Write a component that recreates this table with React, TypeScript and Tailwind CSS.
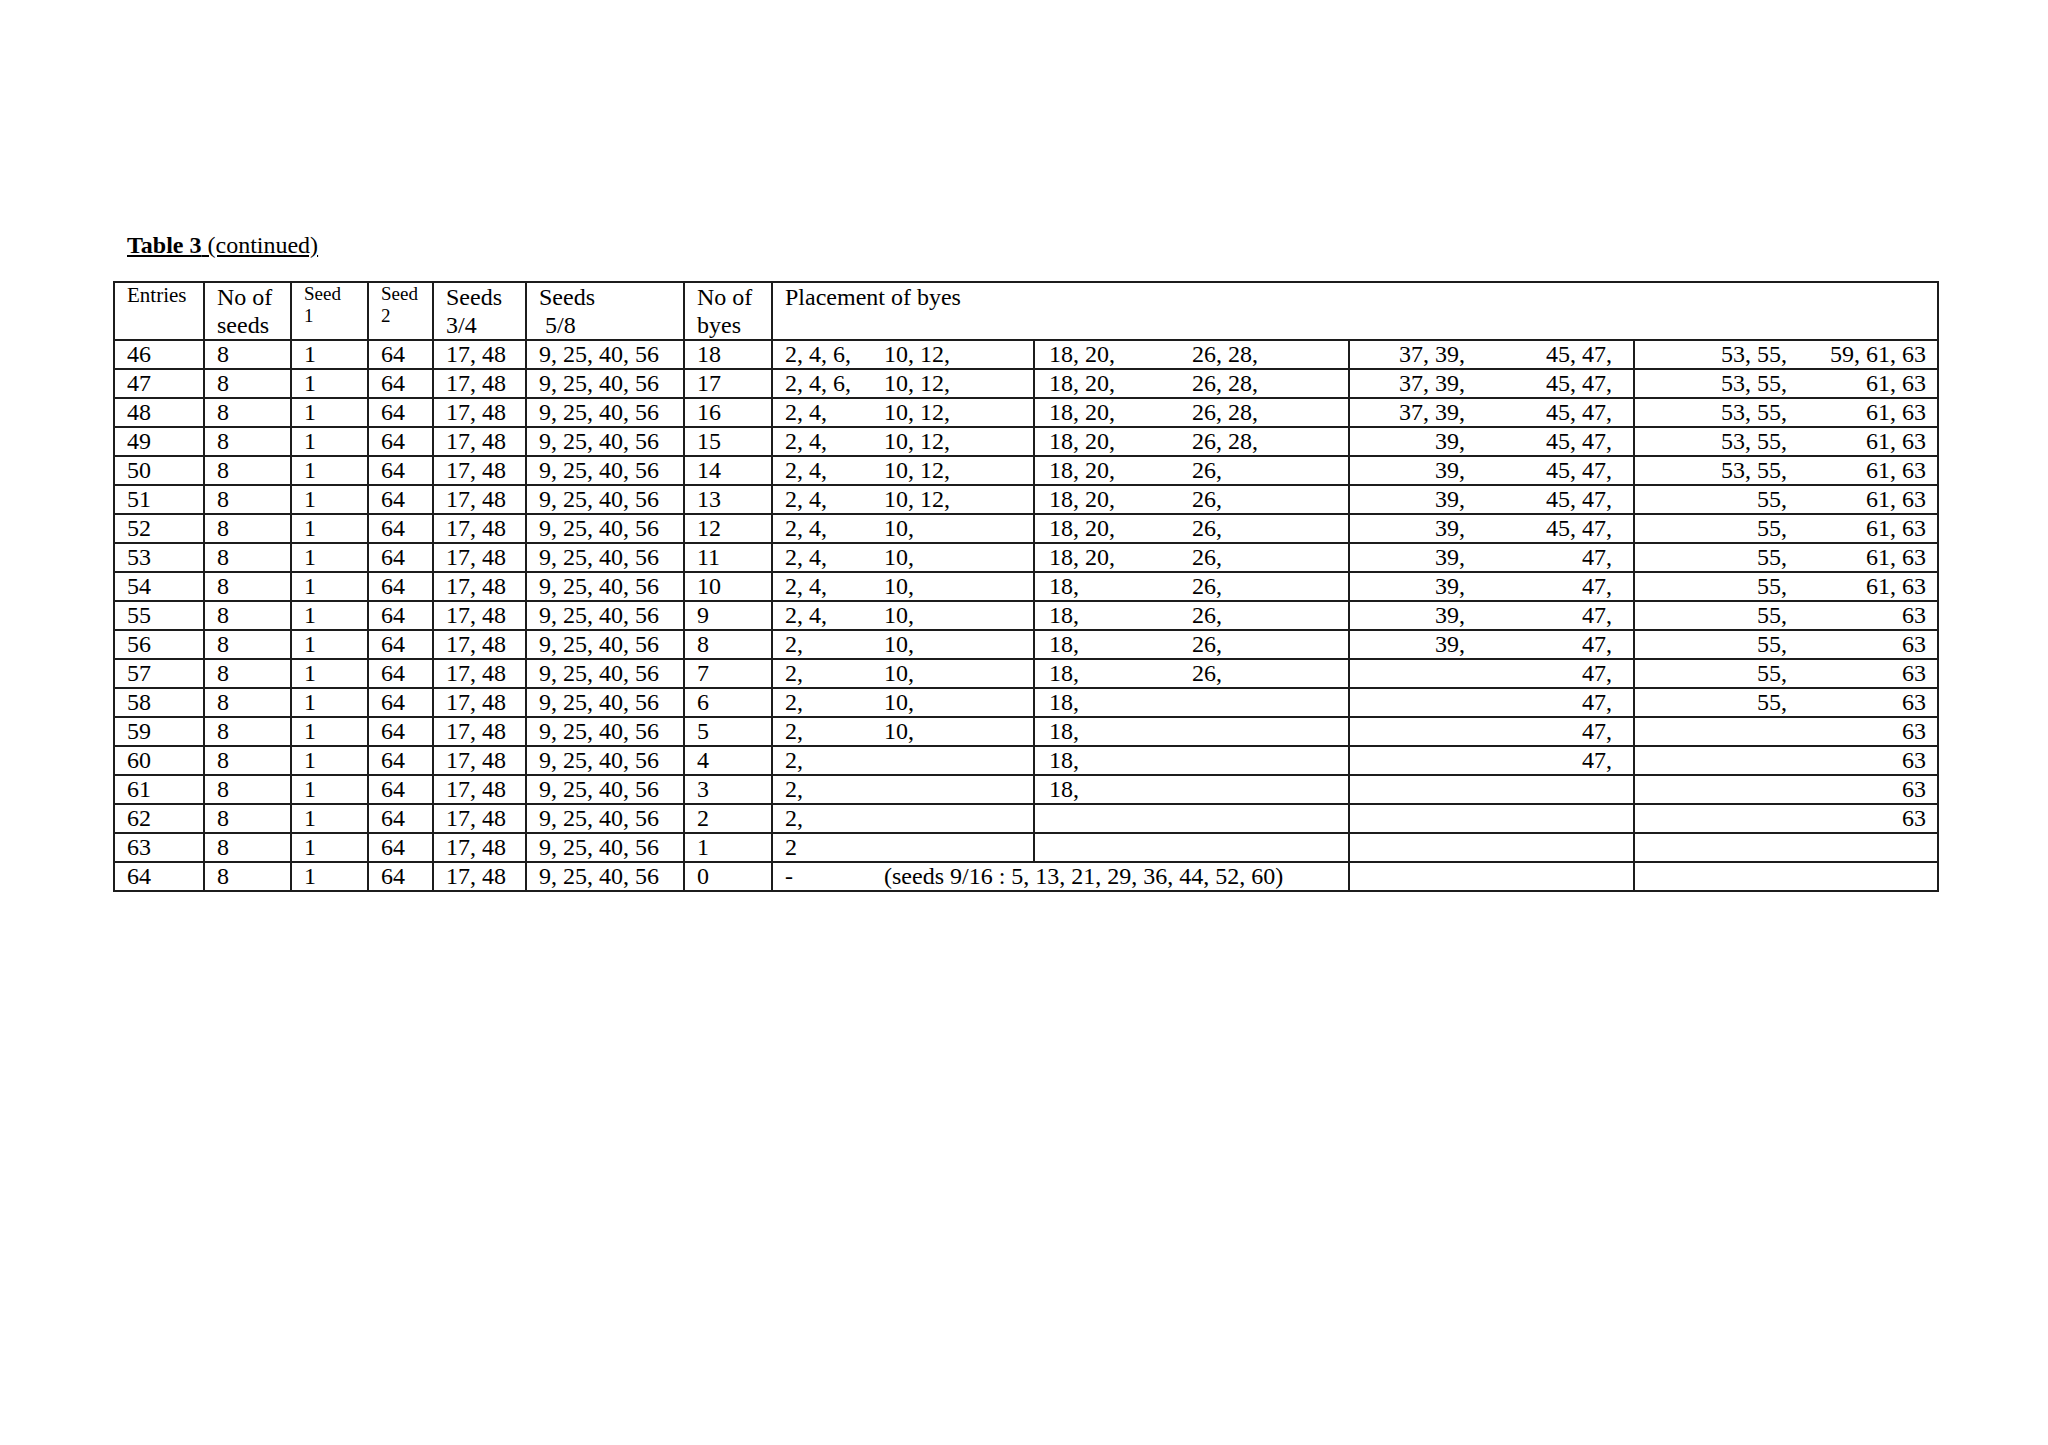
import React from "react";

type Row = [number, string, string, string, string, string, string, string, string];

// entries, then placement of byes: four cells, two tab-stops each
const rows: Row[] = [
  [46, "2, 4, 6,", "10, 12,", "18, 20,", "26, 28,", "37, 39,", "45, 47,", "53, 55,", "59, 61, 63"],
  [47, "2, 4, 6,", "10, 12,", "18, 20,", "26, 28,", "37, 39,", "45, 47,", "53, 55,", "61, 63"],
  [48, "2, 4,", "10, 12,", "18, 20,", "26, 28,", "37, 39,", "45, 47,", "53, 55,", "61, 63"],
  [49, "2, 4,", "10, 12,", "18, 20,", "26, 28,", "39,", "45, 47,", "53, 55,", "61, 63"],
  [50, "2, 4,", "10, 12,", "18, 20,", "26,", "39,", "45, 47,", "53, 55,", "61, 63"],
  [51, "2, 4,", "10, 12,", "18, 20,", "26,", "39,", "45, 47,", "55,", "61, 63"],
  [52, "2, 4,", "10,", "18, 20,", "26,", "39,", "45, 47,", "55,", "61, 63"],
  [53, "2, 4,", "10,", "18, 20,", "26,", "39,", "47,", "55,", "61, 63"],
  [54, "2, 4,", "10,", "18,", "26,", "39,", "47,", "55,", "61, 63"],
  [55, "2, 4,", "10,", "18,", "26,", "39,", "47,", "55,", "63"],
  [56, "2,", "10,", "18,", "26,", "39,", "47,", "55,", "63"],
  [57, "2,", "10,", "18,", "26,", "", "47,", "55,", "63"],
  [58, "2,", "10,", "18,", "", "", "47,", "55,", "63"],
  [59, "2,", "10,", "18,", "", "", "47,", "", "63"],
  [60, "2,", "", "18,", "", "", "47,", "", "63"],
  [61, "2,", "", "18,", "", "", "", "", "63"],
  [62, "2,", "", "", "", "", "", "", "63"],
  [63, "2", "", "", "", "", "", "", ""],
];

const cell = "border-2 border-[#1c1c1c] p-0 align-top";
const td = `${cell} h-[29px] leading-[27px]`;
const th = `${cell} h-[57px] px-[12px] text-left font-normal`;
const pad = "px-[12px]";

export default function App() {
  return (
    <div
      className="min-h-[1445px] w-[2048px] bg-white text-black pt-[231px] pl-[113px]"
      style={{ fontFamily: '"Liberation Serif", "Times New Roman", serif' }}
    >
      <p className="pl-[14px] text-[24px] leading-[28px]">
        <span className="underline underline-offset-[2px]">
          <b>Table 3</b> (continued)
        </span>
      </p>

      <table className="mt-[22px] border-collapse table-fixed w-[1824px] text-[24px]">
        <colgroup>
          <col className="w-[90px]" />
          <col className="w-[87px]" />
          <col className="w-[77px]" />
          <col className="w-[65px]" />
          <col className="w-[93px]" />
          <col className="w-[158px]" />
          <col className="w-[88px]" />
          <col className="w-[262px]" />
          <col className="w-[315px]" />
          <col className="w-[285px]" />
          <col className="w-[304px]" />
        </colgroup>
        <thead>
          <tr>
            <th className={`${th} text-[21px] leading-[24px]`}>Entries</th>
            <th className={`${th} leading-[28px]`}>
              No of
              <br />
              seeds
            </th>
            <th className={`${th} text-[19px] leading-[22px]`}>
              Seed
              <br />1
            </th>
            <th className={`${th} text-[19px] leading-[22px]`}>
              Seed
              <br />2
            </th>
            <th className={`${th} leading-[28px]`}>
              Seeds
              <br />
              3/4
            </th>
            <th className={`${th} leading-[28px]`}>
              Seeds
              <br />
              {"\u00a05/8"}
            </th>
            <th className={`${th} leading-[28px]`}>
              No of
              <br />
              byes
            </th>
            <th colSpan={4} className={`${th} leading-[28px]`}>
              Placement of byes
            </th>
          </tr>
        </thead>
        <tbody>
          {rows.map((r) => (
            <tr key={r[0]}>
              <td className={`${td} ${pad}`}>{r[0]}</td>
              <td className={`${td} ${pad}`}>8</td>
              <td className={`${td} ${pad}`}>1</td>
              <td className={`${td} ${pad}`}>64</td>
              <td className={`${td} ${pad}`}>17, 48</td>
              <td className={`${td} ${pad}`}>9, 25, 40, 56</td>
              <td className={`${td} ${pad}`}>{64 - r[0]}</td>
              <td className={td}>
                <div className="flex whitespace-nowrap pl-[12px]">
                  <span className="w-[99px]">{r[1]}</span>
                  <span>{r[2]}</span>
                </div>
              </td>
              <td className={td}>
                <div className="flex whitespace-nowrap pl-[14px]">
                  <span className="w-[143px]">{r[3]}</span>
                  <span>{r[4]}</span>
                </div>
              </td>
              <td className={td}>
                <div className="flex whitespace-nowrap">
                  <span className="w-[115px] text-right">{r[5]}</span>
                  <span className="w-[147px] text-right">{r[6]}</span>
                </div>
              </td>
              <td className={td}>
                <div className="flex whitespace-nowrap">
                  <span className="w-[152px] text-right">{r[7]}</span>
                  <span className="w-[139px] text-right">{r[8]}</span>
                </div>
              </td>
            </tr>
          ))}
          <tr>
            <td className={`${td} ${pad}`}>64</td>
            <td className={`${td} ${pad}`}>8</td>
            <td className={`${td} ${pad}`}>1</td>
            <td className={`${td} ${pad}`}>64</td>
            <td className={`${td} ${pad}`}>17, 48</td>
            <td className={`${td} ${pad}`}>9, 25, 40, 56</td>
            <td className={`${td} ${pad}`}>0</td>
            <td colSpan={2} className={td}>
              <div className="flex whitespace-nowrap pl-[12px]">
                <span className="w-[99px]">-</span>
                <span>(seeds 9/16 : 5, 13, 21, 29, 36, 44, 52, 60)</span>
              </div>
            </td>
            <td className={td}></td>
            <td className={td}></td>
          </tr>
        </tbody>
      </table>
    </div>
  );
}
